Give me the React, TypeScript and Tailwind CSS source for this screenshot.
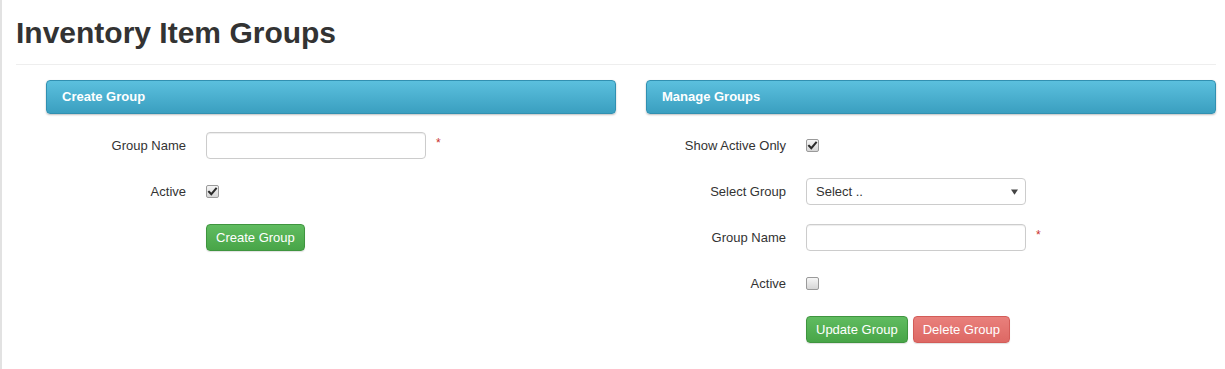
import React from "react";

const font = { fontFamily: '"Liberation Sans", Arial, Helvetica, sans-serif' };

function Check({ checked }: { checked: boolean }) {
  return (
    <span className="relative inline-block w-[13px] h-[13px] rounded-[2px] border border-[#9a9a9a] bg-gradient-to-b from-[#f6f6f6] to-[#d6d6d6]">
      {checked && (
        <svg viewBox="0 0 13 13" className="absolute left-[-1px] top-[-1px] w-[13px] h-[13px]">
          <path d="M3 6.8 L5.3 9.2 L10 3.6" fill="none" stroke="#2b2b2b" strokeWidth="2" strokeLinecap="square" />
        </svg>
      )}
    </span>
  );
}

function Label({ children }: { children: React.ReactNode }) {
  return <div className="w-[140px] text-right text-[13px] text-[#333]">{children}</div>;
}

function Row({ label, children }: { label: string; children: React.ReactNode }) {
  return (
    <div className="flex items-center h-[27px]">
      <Label>{label}</Label>
      <div className="ml-[20px] flex items-center">{children}</div>
    </div>
  );
}

function TextInput() {
  return (
    <div className="flex items-center">
      <div className="w-[220px] h-[27px] rounded-[4px] border border-[#cccccc] bg-white shadow-[inset_0_1px_1px_rgba(0,0,0,0.075)]" />
      <span className="ml-[10px] -mt-[6px] text-[12px] text-[#c9302c]">*</span>
    </div>
  );
}

function SelectBox() {
  return (
    <div className="w-[220px] h-[27px] rounded-[4px] border border-[#cccccc] bg-white flex items-center justify-between pl-[9px] pr-[7px] text-[13px] text-[#333]">
      <span>Select ..</span>
      <svg viewBox="0 0 8 6" className="w-[7px] h-[6px]">
        <path d="M0 0 H8 L4 6 Z" fill="#444" />
      </svg>
    </div>
  );
}

function Btn({ children, color }: { children: React.ReactNode; color: "green" | "red" }) {
  const cls =
    color === "green"
      ? "bg-gradient-to-b from-[#60bc60] to-[#48a548] border-[#3f953f]"
      : "bg-gradient-to-b from-[#e9807c] to-[#dd6864] border-[#d35c58]";
  return (
    <div className={`h-[27px] px-[9px] rounded-[4px] border text-white text-[13px] flex items-center shadow-[0_1px_1px_rgba(0,0,0,0.12)] ${cls}`}>
      {children}
    </div>
  );
}

function PanelHeading({ title }: { title: string }) {
  return (
    <div className="h-[34px] rounded-[4px] border border-[#3190b1] bg-gradient-to-b from-[#5bc0de] to-[#3a9fc0] shadow-[0_1px_2px_rgba(0,0,0,0.25)] flex items-center pl-[15px] text-white text-[13px] font-bold">
      {title}
    </div>
  );
}

export default function App() {
  return (
    <div style={font} className="min-h-[369px] bg-white border-l-2 border-[#e2e2e2]">
      <div className="pl-[14px] pr-[9px]">
        <div className="pt-[16px] pb-[15px] border-b border-[#eeeeee]">
          <h1 className="text-[30px] leading-[33px] font-bold text-[#333]">Inventory Item Groups</h1>
        </div>
        <div className="grid grid-cols-2 mt-[15px]">
          <div className="pl-[30px]">
            <PanelHeading title="Create Group" />
            <div className="mt-[18px] flex flex-col gap-[19px]">
              <Row label="Group Name">
                <TextInput />
              </Row>
              <Row label="Active">
                <Check checked />
              </Row>
              <Row label="">
                <Btn color="green">Create Group</Btn>
              </Row>
            </div>
          </div>
          <div className="pl-[30px]">
            <PanelHeading title="Manage Groups" />
            <div className="mt-[18px] flex flex-col gap-[19px]">
              <Row label="Show Active Only">
                <Check checked />
              </Row>
              <Row label="Select Group">
                <SelectBox />
              </Row>
              <Row label="Group Name">
                <TextInput />
              </Row>
              <Row label="Active">
                <Check checked={false} />
              </Row>
              <Row label="">
                <div className="flex gap-[5px]">
                  <Btn color="green">Update Group</Btn>
                  <Btn color="red">Delete Group</Btn>
                </div>
              </Row>
            </div>
          </div>
        </div>
      </div>
    </div>
  );
}
